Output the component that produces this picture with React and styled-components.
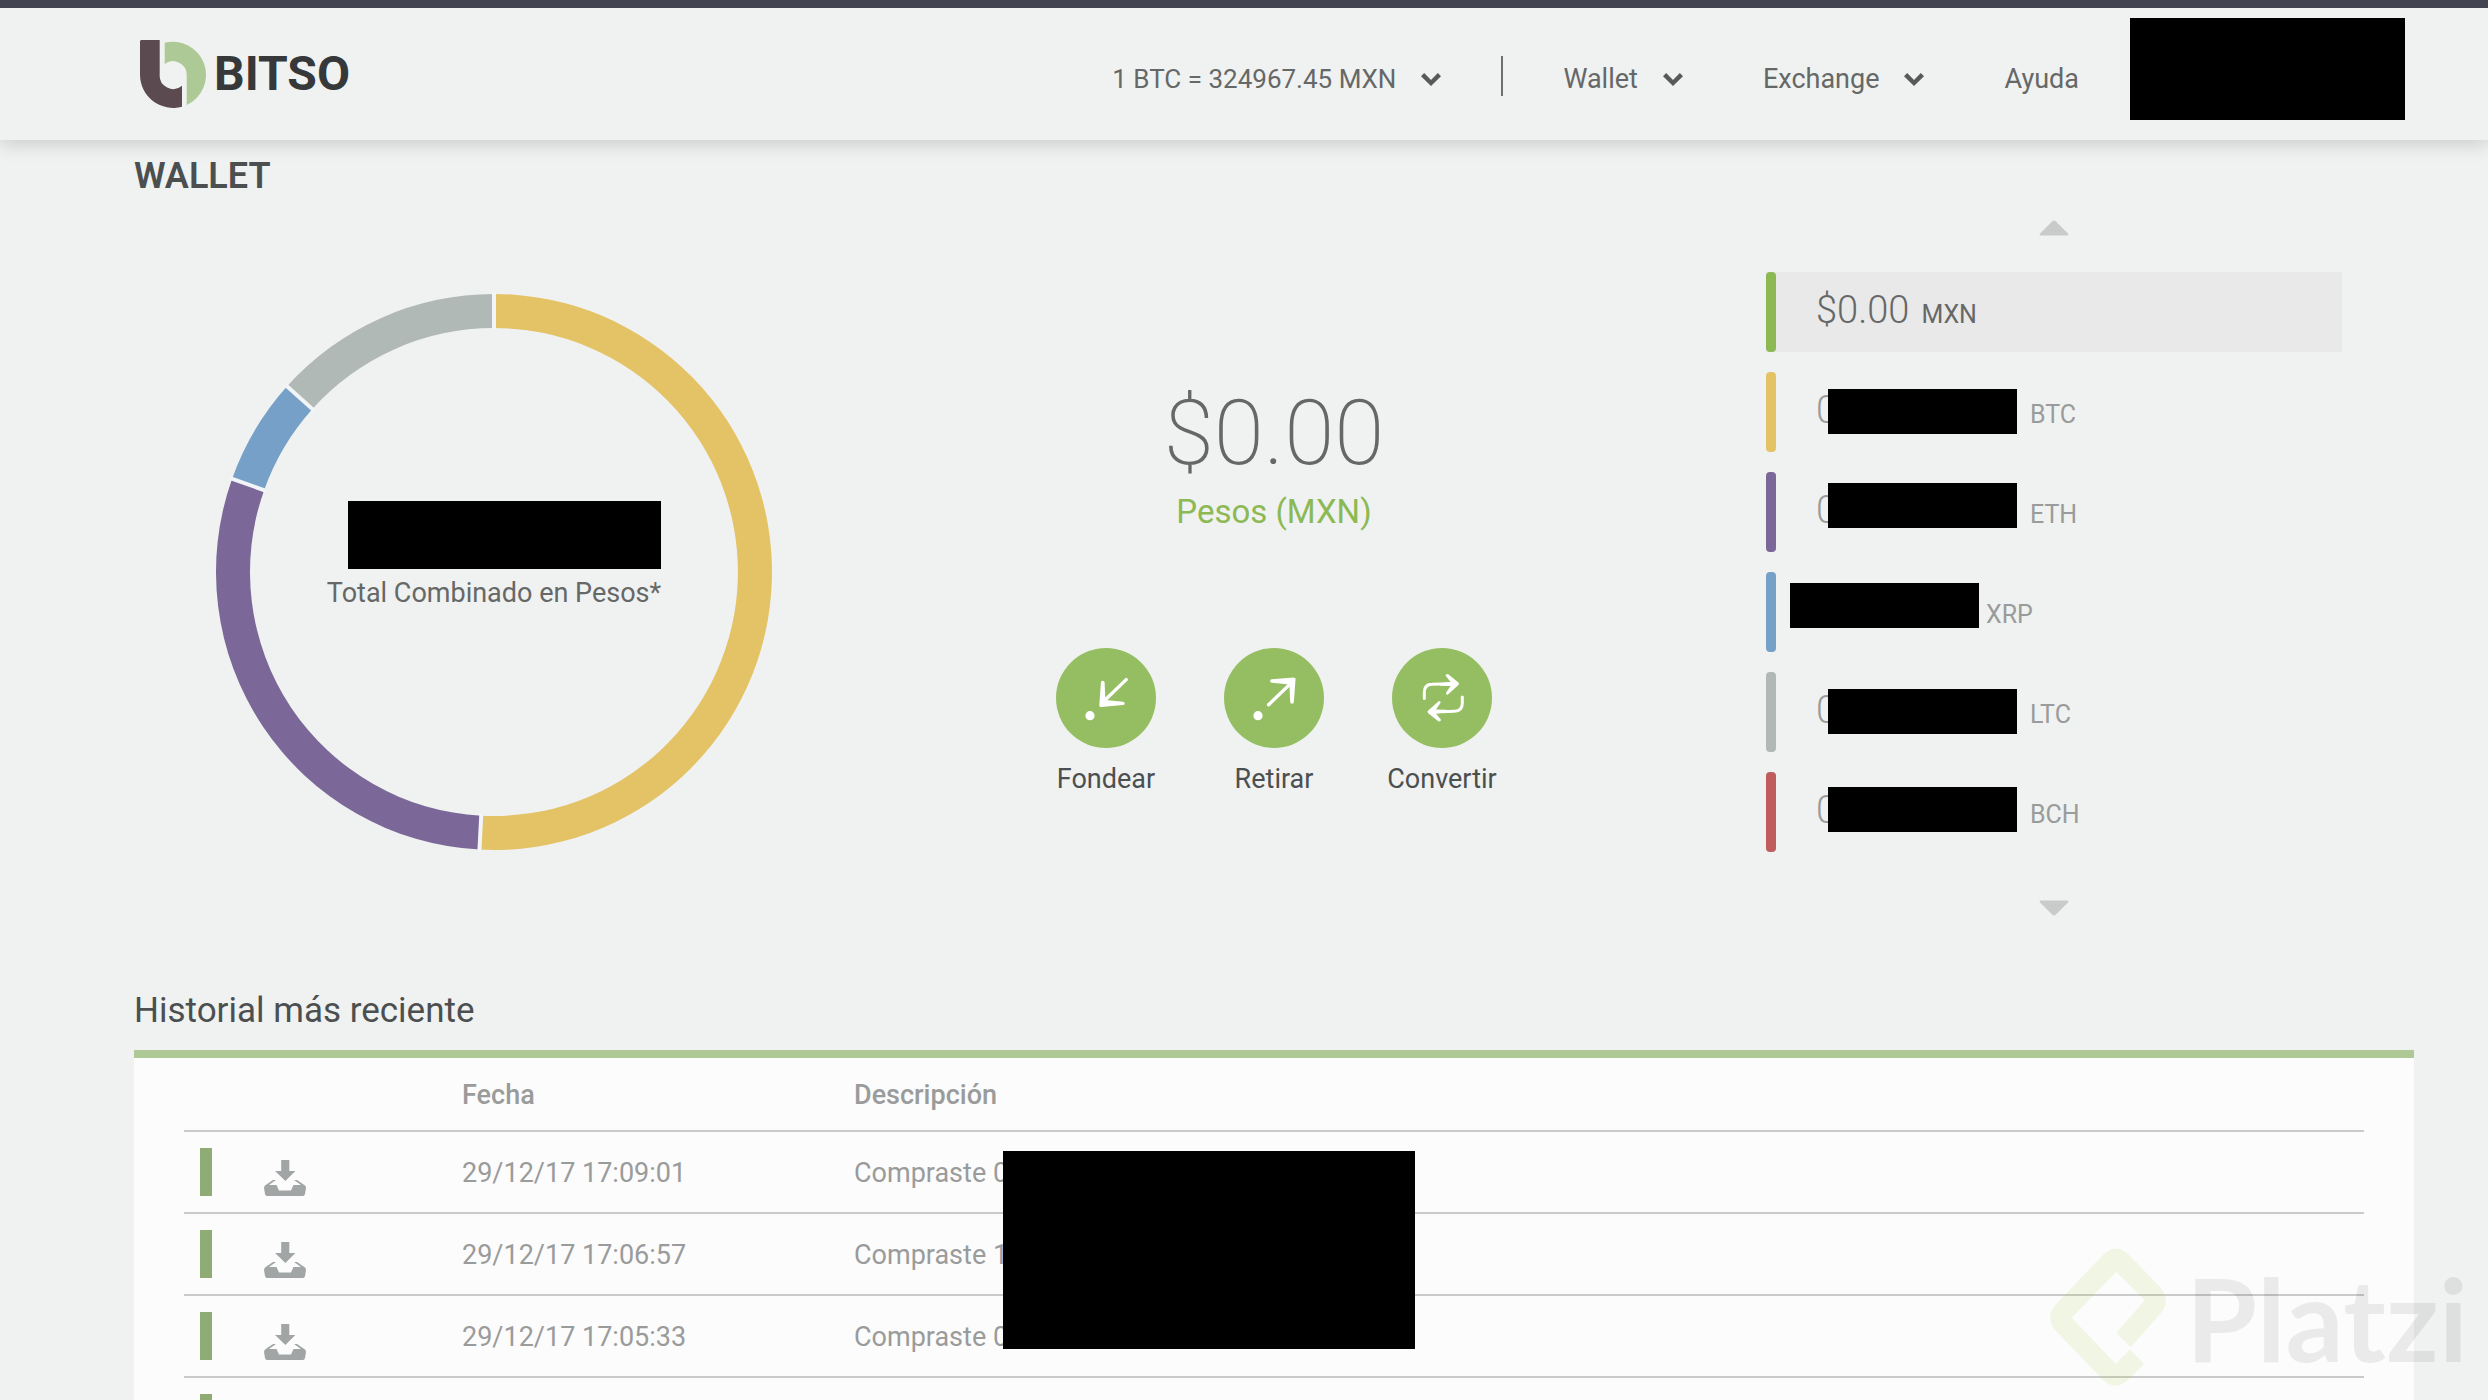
import React from "react";
import styled, { createGlobalStyle } from "styled-components";

const GlobalStyle = createGlobalStyle`
  *, *::before, *::after { box-sizing: border-box; }
  body {
    margin: 0;
    background: #eff2f1;
    color: #666867;
    font-family: Roboto, "Liberation Sans", sans-serif;
    font-size: 27px;
    line-height: 32px;
  }
  button {
    margin: 0;
    padding: 0;
    border: 0;
    background: none;
    color: inherit;
    font: inherit;
    cursor: pointer;
  }
  a { color: inherit; text-decoration: none; }
  h1, h2, p, ul { margin: 0; padding: 0; font-weight: 400; }
  ul { list-style: none; }
  svg { display: block; flex: none; }
`;

const Page = styled.div`
  height: 100vh;
  overflow: hidden;
`;

const Header = styled.header`
  position: relative;
  z-index: 1;
  display: flex;
  align-items: center;
  justify-content: space-between;
  height: 140px;
  padding: 0 83px 0 140px;
  border-top: 8px solid #424452;
  background: #eff2f1;
  box-shadow: 0 4px 18px rgba(0, 0, 0, 0.16);
`;

const Brand = styled.a`
  display: flex;
  align-items: center;
  gap: 6px;
  color: #363839;
  font-size: 48px;
  font-weight: 700;
  line-height: 56px;
`;

const Nav = styled.nav`
  display: flex;
  align-items: center;
`;

const NavItems = styled.div`
  display: flex;
  align-items: center;
  gap: 80px;
  padding-top: 10px;
`;

const NavMenu = styled.button`
  display: flex;
  align-items: center;
  gap: 25px;
  white-space: nowrap;
`;

const Ticker = styled(NavMenu)`
  font-size: 26px;
`;

const Separator = styled.span`
  width: 2px;
  height: 40px;
  margin: 4px 60px 0;
  background: #6f7170;
`;

const Redacted = styled.span`
  display: block;
  flex: none;
  width: ${(p) => p.$width}px;
  height: ${(p) => p.$height}px;
  background: #000;
`;

const AccountSlot = styled.div`
  margin-left: 51px;
  padding-bottom: 10px;
`;

const Content = styled.main`
  padding: 14px 74px 0 134px;
`;

const PageTitle = styled.h1`
  color: #4c4f50;
  font-size: 36px;
  font-weight: 600;
  line-height: 44px;
`;

const Dashboard = styled.section`
  display: grid;
  grid-template-columns: 6fr 7fr 6fr;
  height: 748px;
`;

const ChartArea = styled.div`
  display: grid;
  place-items: center;
  place-content: center;

  > * { grid-area: 1 / 1; }
`;

const ChartCaption = styled.div`
  display: flex;
  flex-direction: column;
  align-items: flex-end;
  gap: 8px;
  padding-bottom: 34px;
`;

const Balance = styled.div`
  display: flex;
  flex-direction: column;
  align-items: center;
  padding-top: 178px;
`;

const BalanceAmount = styled.p`
  font-size: 91px;
  font-weight: 200;
  line-height: 114px;
`;

const BalanceCurrency = styled.p`
  color: #8cb954;
  font-size: 33px;
  line-height: 44px;
`;

const Actions = styled.div`
  display: flex;
  gap: 56px;
  margin-top: 114px;
`;

const Action = styled.button`
  display: flex;
  flex-direction: column;
  align-items: center;
  gap: 15px;
  width: 112px;
  color: #4c4f50;
`;

const Accounts = styled.div`
  display: flex;
  flex-direction: column;
  align-items: center;
  padding: 22px 10% 0;
`;

const AccountList = styled.ul`
  display: grid;
  gap: 20px;
  width: 100%;
  margin: 36px 0 48px;
`;

const AccountRow = styled.button`
  position: relative;
  display: flex;
  align-items: center;
  width: 100%;
  height: 80px;
  background: ${(p) => (p.$active ? "#e9e9e9" : "transparent")};
  color: ${(p) => (p.$active ? "#666867" : "#9a9b9b")};
  text-align: left;

  &::before {
    content: "";
    align-self: stretch;
    width: 10px;
    margin-right: 40px;
    border-radius: 4px;
    background: ${(p) => p.$color};
  }
`;

const AccountText = styled.span`
  display: flex;
  align-items: baseline;
  gap: 12px;
  padding-bottom: 4px;
`;

const AccountAmount = styled.span`
  min-width: ${(p) => p.$width}px;
  font-size: 38px;
  font-weight: 300;
  line-height: 44px;
`;

const AccountUnit = styled.span`
  font-size: 25px;
`;

const AccountMask = styled(Redacted)`
  position: absolute;
  left: ${(p) => p.$left}px;
  top: ${(p) => p.$top}px;
`;

const HistoryTitle = styled.h2`
  padding: 41px 0 15px;
  color: #4c4f50;
  font-size: 35px;
  line-height: 48px;
`;

const HistoryPanel = styled.section`
  position: relative;
  padding: 0 50px;
  border-top: 8px solid #aec896;
  background: #fcfcfc;
`;

const HistoryTable = styled.table`
  width: 100%;
  table-layout: fixed;
  border-collapse: separate;
  border-spacing: 0;
  color: #9a9b9b;

  th {
    height: 72px;
    padding: 2px 0 0;
    font-weight: 500;
    text-align: left;
  }
  td {
    height: 82px;
    padding: 2px 0 0;
    border-top: 2px solid #c9caca;
    white-space: nowrap;
  }
  td:first-child { padding: 0; }
  th:nth-child(1) { width: 278px; }
  th:nth-child(2) { width: 392px; }
`;

const EntryMark = styled.div`
  display: flex;
  align-items: flex-end;
  gap: 52px;
  height: 48px;
  margin-left: 16px;

  &::before {
    content: "";
    width: 12px;
    height: 48px;
    background: #8eac73;
  }
`;

const HistoryMask = styled(Redacted)`
  position: absolute;
  left: 869px;
  top: 93px;
`;

const Watermark = styled.div`
  position: fixed;
  right: 20px;
  bottom: 14px;
  z-index: 2;
  display: flex;
  align-items: center;
  gap: 20px;
  color: rgba(0, 0, 0, 0.07);
  font-family: Lato, "Open Sans", sans-serif;
  font-size: 115px;
  font-weight: 700;
  line-height: 138px;
  pointer-events: none;
`;

const BitsoMark = () => (
  <svg width="68" height="68" viewBox="0 0 68 68" aria-hidden="true">
    <path fill="#5b4b50" d="M1 0H19.7V34.5A13.5 13.5 0 0 0 42 45.7V66.8A33.3 33.3 0 0 1 0 35V1Z" />
    <path fill="#adc995" d="M24.7 2.8A33.12 33.12 0 0 1 46.7 65V35A13.7 13.7 0 0 0 24.7 24Z" />
  </svg>
);

const Chevron = () => (
  <svg width="20" height="13" viewBox="0 0 20 13" aria-hidden="true">
    <path fill="#575a59" d="M3.2 0 10 7 16.8 0 20 3.2 10 13 0 3.2Z" />
  </svg>
);

const Triangle = ({ down }) => (
  <svg width="30" height="16" viewBox="0 0 30 16" aria-hidden="true">
    <path
      fill="#c9cbca"
      transform={down ? "rotate(180 15 8)" : undefined}
      d="M13.4 1.2Q15 0 16.6 1.2L29 13.4Q30 15.2 28 15.4H2Q0 15.2 1 13.4Z"
    />
  </svg>
);

const DownloadIcon = () => (
  <svg width="42" height="36" viewBox="0 0 42 36" fill="#a2a5a5" aria-hidden="true">
    <path d="M17.2 0H25.3V11H31.4L21.4 21 11 11H17.2Z" />
    <path d="M9 20H12L5 25H12.5L15 30.5H27L29.5 25H37L30 20H33L41 25.5Q42 26.5 42 28L41 34Q40.5 36 39 36H3Q1.5 36 1 34L0 28Q0 26.5 1 25.5Z" />
  </svg>
);

const DiagonalArrow = () => (
  <>
    <path fill="#fff" d="M43.2 58.2 44.9 34.6A1.8 1.8 0 0 1 48.6 34.6L49.4 52 67 53.7A1.7 1.7 0 0 1 67 57.1L45 58.9Z" />
    <path stroke="#fff" strokeWidth="3.4" strokeLinecap="round" d="M47 54 70.2 31.6" />
  </>
);

const LoopArrow = () => (
  <>
    <path
      fill="none"
      stroke="#fff"
      strokeWidth="3"
      strokeLinecap="round"
      d="M32.3 50.6V44.5Q32.3 36.3 40 36.3L60 35.7"
    />
    <path
      fill="#fff"
      d="M53.6 27.8Q54 25 56.6 26.6L66.4 34.4Q67.8 35.7 66.4 37L56 46.4Q54 47.3 54 44.8L58.6 38 48 37.8V35L58.6 34Z"
    />
  </>
);

const actionIcons = {
  Fondear: (
    <>
      <circle cx="34" cy="67.7" r="4.6" fill="#fff" />
      <DiagonalArrow />
    </>
  ),
  Retirar: (
    <>
      <circle cx="34" cy="67.7" r="4.6" fill="#fff" />
      <g transform="rotate(180 57.4 44.2)">
        <DiagonalArrow />
      </g>
    </>
  ),
  Convertir: (
    <>
      <LoopArrow />
      <g transform="rotate(180 51.3 49.8)">
        <LoopArrow />
      </g>
    </>
  ),
};

const ActionIcon = ({ name }) => (
  <svg width="100" height="100" viewBox="0 0 100 100" aria-hidden="true">
    <circle cx="50" cy="50" r="50" fill="#95be62" />
    {actionIcons[name]}
  </svg>
);

const slices = [
  { color: "#e4c266", from: 0, to: 183 },
  { color: "#7b6899", from: 183, to: 289.6 },
  { color: "#76a0c8", from: 289.6, to: 311.9 },
  { color: "#b1b9b6", from: 311.9, to: 360 },
];

const polar = (radius, degrees) => {
  const a = (degrees * Math.PI) / 180;
  return `${(280 + radius * Math.sin(a)).toFixed(2)} ${(280 - radius * Math.cos(a)).toFixed(2)}`;
};

const slicePath = ({ from, to }) => {
  const large = to - from > 180 ? 1 : 0;
  return `M${polar(278, from)}A278 278 0 ${large} 1 ${polar(278, to)}L${polar(244, to)}A244 244 0 ${large} 0 ${polar(244, from)}Z`;
};

const Donut = () => (
  <svg width="560" height="560" viewBox="0 0 560 560" role="img" aria-label="Total Combinado en Pesos">
    {slices.map((s) => (
      <path key={s.color} d={slicePath(s)} fill={s.color} />
    ))}
    {slices.map((s) => (
      <path key={s.from} d={`M${polar(242, s.from)}L${polar(280, s.from)}`} stroke="#f2f5f8" strokeWidth="4" />
    ))}
  </svg>
);

const accounts = [
  { unit: "MXN", amount: "$0.00", color: "#8cb954", active: true },
  { unit: "BTC", amount: "0", color: "#e4c266", width: 202, mask: { left: 62, top: 17 } },
  { unit: "ETH", amount: "0", color: "#7b6899", width: 202, mask: { left: 62, top: 11 } },
  { unit: "XRP", amount: "\u00a0", color: "#76a0c8", width: 158, mask: { left: 24, top: 11 } },
  { unit: "LTC", amount: "0", color: "#b1b9b6", width: 202, mask: { left: 62, top: 17 } },
  { unit: "BCH", amount: "0", color: "#be5d5b", width: 202, mask: { left: 62, top: 15 } },
];

const entries = [
  { date: "29/12/17 17:09:01", text: "Compraste 0" },
  { date: "29/12/17 17:06:57", text: "Compraste 1" },
  { date: "29/12/17 17:05:33", text: "Compraste 0" },
  { date: "", text: "" },
];

export default function App() {
  return (
    <Page>
      <GlobalStyle />
      <Header>
        <Brand href="#">
          <BitsoMark />
          BITSO
        </Brand>
        <Nav>
          <NavItems>
            <Ticker>
              1 BTC = 324967.45 MXN
              <Chevron />
            </Ticker>
          </NavItems>
          <Separator />
          <NavItems>
            <NavMenu>
              Wallet
              <Chevron />
            </NavMenu>
            <NavMenu>
              Exchange
              <Chevron />
            </NavMenu>
            <a href="#ayuda">Ayuda</a>
          </NavItems>
          <AccountSlot>
            <Redacted $width={275} $height={102} />
          </AccountSlot>
        </Nav>
      </Header>

      <Content>
        <PageTitle>WALLET</PageTitle>

        <Dashboard>
          <ChartArea>
            <Donut />
            <ChartCaption>
              <Redacted $width={313} $height={68} />
              <p>Total Combinado en Pesos*</p>
            </ChartCaption>
          </ChartArea>

          <Balance>
            <BalanceAmount>$0.00</BalanceAmount>
            <BalanceCurrency>Pesos (MXN)</BalanceCurrency>
            <Actions>
              {Object.keys(actionIcons).map((name) => (
                <Action key={name}>
                  <ActionIcon name={name} />
                  <span>{name}</span>
                </Action>
              ))}
            </Actions>
          </Balance>

          <Accounts>
            <button aria-label="Anterior">
              <Triangle />
            </button>
            <AccountList>
              {accounts.map((a) => (
                <li key={a.unit}>
                  <AccountRow $active={a.active} $color={a.color}>
                    <AccountText>
                      <AccountAmount $width={a.width || 0}>{a.amount}</AccountAmount>
                      <AccountUnit>{a.unit}</AccountUnit>
                    </AccountText>
                    {a.mask && <AccountMask $left={a.mask.left} $top={a.mask.top} $width={189} $height={45} />}
                  </AccountRow>
                </li>
              ))}
            </AccountList>
            <button aria-label="Siguiente">
              <Triangle down />
            </button>
          </Accounts>
        </Dashboard>

        <HistoryTitle>Historial más reciente</HistoryTitle>
        <HistoryPanel>
          <HistoryTable>
            <thead>
              <tr>
                <th />
                <th>Fecha</th>
                <th>Descripción</th>
              </tr>
            </thead>
            <tbody>
              {entries.map((e, i) => (
                <tr key={i}>
                  <td>
                    <EntryMark>
                      <DownloadIcon />
                    </EntryMark>
                  </td>
                  <td>{e.date}</td>
                  <td>{e.text}</td>
                </tr>
              ))}
            </tbody>
          </HistoryTable>
          <HistoryMask $width={412} $height={198} />
        </HistoryPanel>
      </Content>

      <Watermark>
        <svg width="116" height="138" viewBox="0 0 116 138" aria-hidden="true">
          <path
            fill="#a8c83c"
            fillOpacity="0.12"
            d="M66.3 23.7 21.7 69.7 65.7 115.7 80 101.3 94.3 116 78 132Q66 143 53 132L6 83Q-6 70 6 56L53 7Q66-6 79 7L110 39Q122 53 110 66L80.7 99.3 66.3 85 94.7 52.3Z"
          />
        </svg>
        Platzi
      </Watermark>
    </Page>
  );
}
